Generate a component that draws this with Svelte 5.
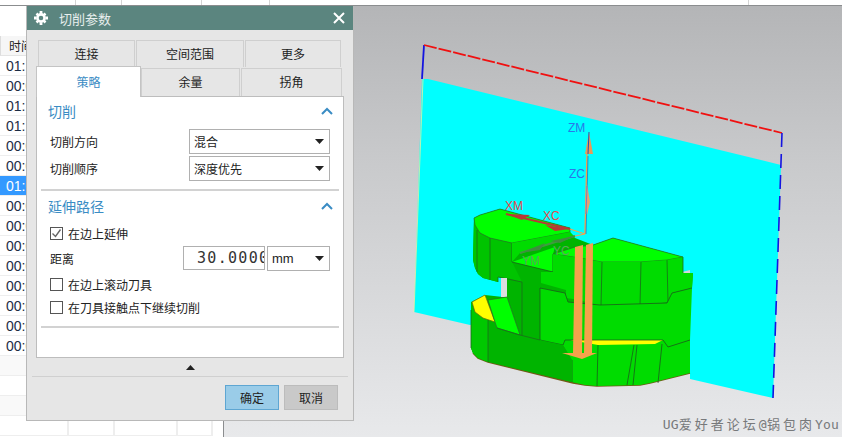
<script>
  // table rows behind the dialog, only the first bit of the time is visible
  const times = ['01:12', '00:05', '01:15', '01:17', '00:08', '00:09', '01:02', '00:03', '00:04', '00:06', '00:02', '00:07', '00:05', '00:03', '00:08'];
  const selectedRow = 6;
  const emptyRows = [0, 1, 2, 3];
  const cols = [0, 1, 2, 3];
  const ticks = [75, 121, 201, 269, 748];
</script>

{#snippet caret()}
  <svg class="caret" width="9" height="5" viewBox="0 0 9 5"><path d="M0 0h9L4.5 5z" fill="#222" /></svg>
{/snippet}

{#snippet chevron()}
  <svg class="chevron" width="12" height="8" viewBox="0 0 12 8"><path d="M1 7l5-5 5 5" fill="none" stroke="#3a8cc4" stroke-width="2" /></svg>
{/snippet}

{#snippet checkbox(on)}
  <span class="box">
    {#if on}
      <svg width="11" height="11" viewBox="0 0 11 11"><path d="M1.5 5.5l3 3 5-7" fill="none" stroke="#666" stroke-width="1.4" /></svg>
    {/if}
  </span>
{/snippet}

<div class="app">
  <div class="ruler">
    {#each ticks as t}
      <i class="tick" style="left:{t}px"></i>
    {/each}
  </div>

  <div class="main">
    <div class="list">
      <div class="list-head">时间</div>
      {#each times as t, i}
        <div class="row" class:selected={i === selectedRow}>{t}</div>
      {/each}
      {#each emptyRows as r}
        <div class="empty" class:alt={r % 2 === 0}>
          {#each cols as c}
            <span class="cell c{c}"></span>
          {/each}
        </div>
      {/each}
    </div>

    <div class="view">
      <svg class="scene" width="618" height="431" viewBox="224 6 618 431">
        <!-- blank sheet -->
        <polygon points="422,79 428,79 781,165 773,398 690,379 690,270 470,325 414,312" fill="#00ffff" />
        <path d="M423 79L414 312" stroke="#e8f0a0" stroke-width=".8" />
        <path d="M424 45L422 79" stroke="#1414e0" stroke-width="1.8" />
        <path d="M424 45L782 133" stroke="#f01010" stroke-width="1.8" stroke-dasharray="13 2" />
        <path d="M782 133L773 398" stroke="#1414e0" stroke-width="1.6" stroke-dasharray="14 7" />

        <!-- part, whole outline -->
        <polygon points="474,218 473,260 475,268 478,274 483,278 498,282 498,277 503,278 503,297 485,295 471,302 471,348 473,353 478,358 488,362 573,383 585,385 597,386 640,385 650,383 690,373 690,288 692,288 693,273 683,273 683,257 613,238 593,245 575,238 570,232 570,228 500,209 480,215" fill="#00b400" />
        <path d="M473 353L478 358 488 362 573 383 585 385 597 386 640 385 650 383 690 373" fill="none" stroke="#6f5a16" stroke-width="1.5" />

        <!-- left block side -->
        <polygon points="474,218 480,233 490,238 512,243 512,262 522,282 507,278 498,277 498,282 483,278 478,274 475,268 473,260" fill="#00c400" />
        <path d="M477 230L477 272M490 238L490 280M512 243L512 262M498 282L498 277 522 282 522 340" stroke="#1c6b1c" stroke-width=".8" fill="none" />
        <polygon points="474,218 480,215 500,209 570,228 570,232 512,243 490,238 480,233 475,225" fill="#00ff00" stroke="#2a6b2a" stroke-width=".7" />
        <polygon points="512,243 570,232 575,237 520,253 512,262" fill="#00dc00" />
        <polygon points="512,262 555,247 553,254 553,272" fill="#00ff00" />
        <path d="M512 262L553 272 553 254" stroke="#1c5c1c" stroke-width=".8" fill="none" />

        <!-- web gap -->
        <polygon points="501,278 507,278 507,297 501,297" fill="#dcdde0" />

        <!-- right upper block -->
        <polygon points="553,254 575,247 593,245 613,238 683,257 667,260 640,262 602,262 580,258" fill="#00ff00" stroke="#2a6b2a" stroke-width=".7" />
        <polygon points="553,254 580,258 602,262 640,262 667,260 683,257 683,273 693,273 692,288 672,293 668,302 640,306 600,306 580,300 566,298 566,290 541,283 541,272 553,272" fill="#00dc00" />
        <path d="M581 258L580 300M602 262L601 306M641 262L640 306M667 260L668 302" stroke="#1c6b1c" stroke-width=".8" fill="none" />
        <path d="M683 257L683 273" stroke="#1c6b1c" stroke-width=".8" />

        <!-- middle faces -->
        <polygon points="540,288 565,293 568,302 600,305 667,303 672,293 692,288 690,340 668,347 663,340 565,340 563,345 540,340" fill="#00dc00" />
        <path d="M540 340L540 288 565 293 568 302 600,305 667,303 672,293 692,288" stroke="#1c5c1c" stroke-width=".8" fill="none" />
        <polygon points="563,345 565,340 663,340 668,347 690,340 690,373 650,383 640,385 597,386 585,385 572,382 572,360" fill="#00dc00" />
        <polygon points="570,340 663,340 655,344 598,345" fill="#ffff00" />
        <path d="M540 340L563 345 565 340 663 340 668 347 690 340M598 345L597 386M637 345L633 385M662 344L658 383M572 360L572 382M634 345L627 385" stroke="#1c5c1c" stroke-width=".8" fill="none" />

        <!-- lower left -->
        <polygon points="471,302 475,312 483,318 495,322 497,328 520,335 540,340 563,345 572,360 572,382 488,362 478,358 473,353 471,348" fill="#00b400" />
        <polygon points="471,302 475,312 483,318 488,320 488,362 478,358 473,353 471,348" fill="#00c800" />
        <polygon points="472,302 485,295 495,322 483,318 475,312" fill="#ffff00" stroke="#6a6a10" stroke-width=".7" />
        <polygon points="488,300 507,297 520,335 497,328 495,322" fill="#00ff00" stroke="#2a6b2a" stroke-width=".7" />
        <path d="M471 310L471 348M488 320L488 362M497 328L520 335 540 340" stroke="#1c6b1c" stroke-width=".8" fill="none" />

        <!-- tool axis bars -->
        <polygon points="575,247 583,245 582,354 573,354" fill="#f4a24c" />
        <polygon points="586,245 593,243 592,354 584,354" fill="#f4a24c" />
        <polygon points="562,353 597,353 582,359" fill="#f4a24c" />

        <!-- csys -->
        <path d="M585 234L587 154" stroke="#f4a24c" stroke-width="1.4" />
        <path d="M586 234L588 156" stroke="#2050c0" stroke-width=".6" />
        <polygon points="589,132 593,154 585,154" fill="#e89a58" />
        <path d="M589 132L588 154" stroke="#2a50b0" stroke-width="1" />
        <polygon points="587,184 590,202 587,215 585,202" fill="#e8a070" />
        <path d="M587 186L586 214" stroke="#7a80c0" stroke-width="1" />
        <path d="M506 214L570 229" stroke="#b83838" stroke-width="2" />
        <polygon points="506,214 530,215 522,220" fill="#b83838" />
        <polygon points="545,225 570,229 555,231" fill="#b83838" />
        <path d="M570 229L585 234" stroke="#f4a24c" stroke-width="1.2" />
        <path d="M520 253L575 236" stroke="#3e9c3e" stroke-width="2" />
        <polygon points="520,253 545,243 540,250" fill="#3e8e3e" />
        <polygon points="550,241 575,236 560,243" fill="#3e8e3e" />
        <path d="M585 234L575 236" stroke="#f4a24c" stroke-width="1.2" />

        <text x="568" y="132" class="axis" fill="#2a78e8">ZM</text>
        <text x="569" y="178" class="axis" fill="#2a78e8">ZC</text>
        <text x="505" y="210" class="axis" fill="#e84a4a">XM</text>
        <text x="543" y="220" class="axis" fill="#e84a4a">XC</text>
        <text x="522" y="265" class="axis" fill="#5aa85a">YM</text>
        <text x="553" y="255" class="axis" fill="#5aa85a">YC</text>
      </svg>
      <div class="watermark">UG<span class="cjk">爱好者论坛</span>@<span class="cjk">锅包肉</span>You</div>
    </div>
  </div>

  <div class="dialog">
    <div class="title">
      <svg width="14" height="14" viewBox="0 0 14 14">
        <g fill="#fff">
          <path d="M5.6 0h2.8v2.4h-2.8zM5.6 11.6h2.8V14h-2.8zM0 5.6h2.4v2.8H0zM11.6 5.6H14v2.8h-2.4zM1.6 3.4l1.8-1.8 1.8 1.8-1.8 1.8zM8.8 3.4l1.8-1.8 1.8 1.8-1.8 1.8zM1.6 10.6l1.8-1.8 1.8 1.8-1.8 1.8zM8.8 10.6l1.8-1.8 1.8 1.8-1.8 1.8z" />
        </g>
        <circle cx="7" cy="7" r="3.6" fill="none" stroke="#fff" stroke-width="2.6" />
      </svg>
      <span class="title-text">切削参数</span>
      <svg class="close" width="12" height="12" viewBox="0 0 12 12"><path d="M1 1l10 10M11 1L1 11" stroke="#fff" stroke-width="2" /></svg>
    </div>

    <div class="tabs-top">
      <div class="tab w1">连接</div>
      <div class="tab w2">空间范围</div>
      <div class="tab w3">更多</div>
    </div>
    <div class="tabs-bottom">
      <div class="tab active">策略</div>
      <div class="tab w4">余量</div>
      <div class="tab w5">拐角</div>
    </div>

    <div class="panel">
      <div class="section-head">切削 {@render chevron()}</div>
      <div class="field">
        <span>切削方向</span>
        <div class="select wide">混合 {@render caret()}</div>
      </div>
      <div class="field">
        <span>切削顺序</span>
        <div class="select wide">深度优先 {@render caret()}</div>
      </div>
      <hr class="first" />

      <div class="section-head">延伸路径 {@render chevron()}</div>
      <label class="check first-check">{@render checkbox(true)} 在边上延伸</label>
      <div class="field dist">
        <span>距离</span>
        <div class="dist-inputs">
          <div class="num"><span>30.0000</span></div>
          <div class="select unit">mm {@render caret()}</div>
        </div>
      </div>
      <label class="check">{@render checkbox(false)} 在边上滚动刀具</label>
      <label class="check">{@render checkbox(false)} 在刀具接触点下继续切削</label>
      <hr class="last" />
    </div>

    <div class="more"><svg width="9" height="5" viewBox="0 0 9 5"><path d="M4.5 0L9 5H0z" fill="#222" /></svg></div>
    <div class="foot">
      <button class="ok">确定</button>
      <button class="cancel">取消</button>
    </div>
  </div>
</div>

<style>
  :global(body) {
    margin: 0;
    background: #fff;
  }

  .app {
    position: relative;
    width: 842px;
    height: 437px;
    overflow: hidden;
    display: flex;
    flex-direction: column;
    font-family: "Noto Sans CJK SC", "Liberation Sans", sans-serif;
    font-size: 12px;
    color: #222;
  }

  .ruler {
    position: relative;
    height: 5px;
    flex: none;
    background: #fff;
    border-bottom: 1px solid #8b8d8f;
  }

  .tick {
    position: absolute;
    top: 0;
    width: 1px;
    height: 5px;
    background: #d4d4d4;
  }

  .main {
    flex: 1;
    display: flex;
    min-height: 0;
  }

  .list {
    width: 224px;
    flex: none;
    padding-top: 30px;
    box-sizing: border-box;
    background: #fff;
    border-right: 1px solid #8b8d8f;
    overflow: hidden;
    font-family: "Liberation Sans", "Noto Sans CJK SC", sans-serif;
    font-size: 14px;
  }

  .list-head {
    height: 20px;
    line-height: 19px;
    padding-left: 8px;
    width: 205px;
    background: #f6f6f6;
    border-left: 1px solid #ddd;
    border-bottom: 1px solid #e4e4e4;
    box-sizing: border-box;
    font-family: "Noto Sans CJK SC", sans-serif;
    font-size: 12px;
  }

  .row {
    height: 20px;
    line-height: 21px;
    padding-left: 6px;
    width: 213px;
    box-sizing: border-box;
    border-bottom: 1px solid #eee;
    color: #1c2c44;
  }

  .row.selected {
    background: #3399ff;
    color: #fff;
  }

  .empty {
    display: flex;
    height: 20px;
    width: 213px;
    box-sizing: border-box;
    border-bottom: 1px solid #eee;
  }

  .empty.alt {
    background: #f9f9f9;
  }

  .cell {
    border-right: 2px solid #eee;
    box-sizing: border-box;
    height: 100%;
  }

  .c0 { width: 69px; }
  .c1 { width: 46px; }
  .c2 { width: 63px; }
  .c3 { width: 35px; }

  .view {
    position: relative;
    flex: 1;
    background: linear-gradient(180deg, #b4b5b7 0%, #c8c9cb 35%, #e8e9eb 100%);
  }

  .scene {
    position: absolute;
    left: 0;
    top: 0;
    display: block;
  }

  .axis {
    font-family: "Liberation Sans", sans-serif;
    font-size: 12px;
  }

  .watermark {
    position: absolute;
    right: 3px;
    bottom: 4px;
    font-family: "DejaVu Sans Mono", "Noto Sans CJK SC", monospace;
    font-size: 13px;
    letter-spacing: 0.2px;
    color: #77797b;
    white-space: nowrap;
  }

  .cjk {
    letter-spacing: 3px;
  }

  .dialog {
    position: absolute;
    left: 26px;
    top: 6px;
    width: 328px;
    height: 415px;
    box-sizing: border-box;
    background: #e6e6e6;
    border: 1px solid #b8b8b8;
    border-top: none;
    display: flex;
    flex-direction: column;
  }

  .title {
    height: 24px;
    flex: none;
    background: #5b857f;
    display: flex;
    align-items: center;
    padding: 0 8px 0 7px;
    color: #fff;
    font-size: 13px;
  }

  .title-text {
    margin-left: 11px;
    flex: 1;
    color: #e8efee;
  }

  .tabs-top,
  .tabs-bottom {
    display: flex;
    flex: none;
  }

  .tabs-top {
    margin: 10px 0 0 11px;
    gap: 1px;
  }

  .tabs-bottom {
    margin: -1px 0 0 9px;
    align-items: flex-end;
    gap: 1px;
    position: relative;
  }

  .tab {
    box-sizing: border-box;
    height: 27px;
    line-height: 26px;
    text-align: center;
    background: #e6e6e6;
    border: 1px solid #cfcfcf;
    border-bottom: none;
  }

  .w1 { width: 97px; }
  .w2 { width: 108px; }
  .w3 { width: 96px; }
  .w4 { width: 99px; height: 28px; }
  .w5 { width: 101px; height: 28px; }

  .tab.active {
    position: relative;
    z-index: 1;
    width: 105px;
    height: 31px;
    line-height: 29px;
    margin-bottom: -1px;
    margin-right: -1px;
    background: #fff;
    color: #3a8cc4;
    border-color: #c4c4c4;
  }

  .panel {
    box-sizing: border-box;
    margin: 0 0 0 9px;
    width: 308px;
    height: 262px;
    flex: none;
    background: #fff;
    border: 1px solid #bdbdbd;
    padding: 4px 4px 0 4px;
    display: flex;
    flex-direction: column;
  }

  .section-head {
    display: flex;
    justify-content: space-between;
    align-items: center;
    height: 20px;
    padding: 0 6px 0 7px;
    font-size: 14px;
    color: #3a8cc4;
    flex: none;
  }

  .field {
    display: flex;
    justify-content: space-between;
    align-items: center;
    padding: 0 9px;
    margin-top: 2px;
    flex: none;
  }

  .section-head + .field {
    margin-top: 8px;
  }

  .select {
    box-sizing: border-box;
    height: 25px;
    border: 1px solid #b0b0b0;
    background: #fff;
    display: flex;
    justify-content: space-between;
    align-items: center;
    padding: 0 5px 0 4px;
  }

  .select.wide {
    width: 141px;
  }

  .select.unit {
    width: 63px;
    font-family: "Liberation Sans", sans-serif;
    font-size: 13px;
  }

  hr {
    width: 100%;
    margin: 0;
    border: none;
    border-top: 2px solid #d2d2d2;
    flex: none;
  }

  hr.first {
    margin: 8px 0 5px;
  }

  hr.last {
    margin-top: 7px;
  }

  .check {
    display: flex;
    align-items: center;
    gap: 5px;
    padding-left: 9px;
    height: 23px;
    flex: none;
  }

  .first-check {
    margin-top: 6px;
  }

  .box {
    width: 13px;
    height: 13px;
    box-sizing: border-box;
    border: 1px solid #555;
    background: #fff;
    display: flex;
    align-items: center;
    justify-content: center;
  }

  .dist {
    height: 25px;
    margin: 1px 0 2px;
  }

  .dist-inputs {
    display: flex;
    gap: 2px;
  }

  .num {
    box-sizing: border-box;
    width: 82px;
    height: 24px;
    border: 1px solid #b0b0b0;
    overflow: hidden;
    white-space: nowrap;
    padding-left: 13px;
    line-height: 22px;
    font-family: "DejaVu Sans Mono", monospace;
    font-size: 15px;
    letter-spacing: 1.3px;
    color: #333;
  }

  .more {
    height: 18px;
    flex: none;
    display: flex;
    align-items: center;
    justify-content: center;
    margin: 0 5px;
    border-bottom: 1px solid #d0d0d0;
  }

  .foot {
    display: flex;
    justify-content: flex-end;
    gap: 5px;
    padding: 8px 15px 0 0;
  }

  button {
    box-sizing: border-box;
    width: 54px;
    height: 25px;
    padding: 0;
    font-family: inherit;
    font-size: 12px;
    color: #222;
  }

  .ok {
    background: #9acce8;
    border: 1px solid #5ea6d2;
  }

  .cancel {
    background: #c9c9c9;
    border: 1px solid #bcbcbc;
  }
</style>
